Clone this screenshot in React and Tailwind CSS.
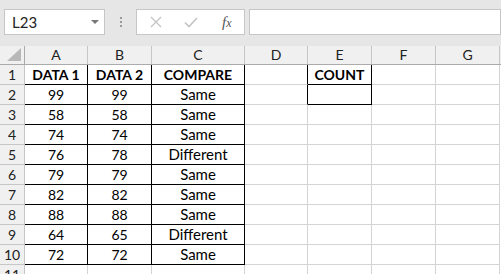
import React from 'react';

const cols = [
    { key: 'A', w: 'w-[63px]' },
    { key: 'B', w: 'w-[64px]' },
    { key: 'C', w: 'w-[93px]' },
    { key: 'D', w: 'w-[63px]' },
    { key: 'E', w: 'w-[64px]' },
    { key: 'F', w: 'w-[64px]' },
    { key: 'G', w: 'w-[64px]' },
];

const rows = [
    ['99', '99', 'Same'],
    ['58', '58', 'Same'],
    ['74', '74', 'Same'],
    ['76', '78', 'Different'],
    ['79', '79', 'Same'],
    ['82', '82', 'Same'],
    ['88', '88', 'Same'],
    ['64', '65', 'Different'],
    ['72', '72', 'Same'],
];

const Toolbar = () => (
    <div className="h-[46px] bg-[#e6e6e6] flex items-start pt-[9px] pl-[4px]">
        <div className="w-[101px] h-[26px] bg-white border border-[#c6c6c6] flex items-center justify-between pl-[7px] pr-[5px]">
            <span className="text-[15px] text-[#222]">L23</span>
            <span className="w-0 h-0 border-l-[4px] border-r-[4px] border-t-[4px] border-l-transparent border-r-transparent border-t-[#777]" />
        </div>
        <div className="w-[31px] h-[26px] flex flex-col items-center justify-center gap-[2px]">
            <span className="w-[2px] h-[2px] bg-[#999]" />
            <span className="w-[2px] h-[2px] bg-[#999]" />
            <span className="w-[2px] h-[2px] bg-[#999]" />
        </div>
        <div className="w-[109px] h-[26px] bg-white border border-[#c6c6c6] flex items-center">
            <svg width="12" height="12" viewBox="0 0 12 12" className="ml-[13px]">
                <path d="M1 1 L11 11 M11 1 L1 11" stroke="#c4c4c4" strokeWidth="1.3" />
            </svg>
            <svg width="14" height="12" viewBox="0 0 14 12" className="ml-[22px]">
                <path d="M1 6.5 L5 10.5 L13 2" stroke="#c4c4c4" strokeWidth="1.6" fill="none" />
            </svg>
            <span className="ml-[24px] text-[15px] italic text-[#555] font-['Liberation_Serif',serif] leading-none">
                f<span className="text-[12px]">x</span>
            </span>
        </div>
        <div className="ml-[4px] flex-1 h-[26px] bg-white border border-[#c6c6c6]" />
    </div>
);

const HeaderRow = () => (
    <div className="flex h-[19px] bg-[#f0f0f0] border-b border-[#ababab]">
        <div className="w-[25px] shrink-0 border-r border-[#ababab] relative">
            <svg width="14" height="13" viewBox="0 0 14 13" className="absolute right-[3px] bottom-[3px]">
                <path d="M14 0 L14 13 L0 13 Z" fill="#b8b8b8" />
            </svg>
        </div>
        {cols.map((c) => (
            <div key={c.key} className={`${c.w} shrink-0 border-r border-[#c6c6c6] flex items-center justify-center text-[14px] text-[#222] leading-none`}>
                {c.key}
            </div>
        ))}
    </div>
);

const Row = ({ n, cells, bold }) => (
    <div className="flex h-[20px]">
        <div className="w-[25px] shrink-0 bg-[#f0f0f0] border-r border-b border-[#c6c6c6] flex items-center justify-center text-[14px] text-[#222] leading-none">
            {n}
        </div>
        {cols.map((c, i) => {
            const inTable = i < 3 && n <= 10;
            const inCount = i === 4 && (n === 1 || n === 2);
            const dRight = i === 3 && (n === 1 || n === 2);
            const bottomBlack = inTable || inCount;
            const rightBlack = inTable || inCount || dRight;
            let text = '';
            if (n === 1) {
                if (i === 0) text = 'DATA 1';
                if (i === 1) text = 'DATA 2';
                if (i === 2) text = 'COMPARE';
                if (i === 4) text = 'COUNT';
            } else if (cells && i < 3) {
                text = cells[i];
            }
            return (
                <div
                    key={c.key}
                    className={`${c.w} shrink-0 border-r border-b ${rightBlack ? 'border-r-black' : 'border-r-[#d4d4d4]'} ${bottomBlack ? 'border-b-black' : 'border-b-[#d4d4d4]'} flex items-center justify-center leading-none ${bold ? 'font-bold text-[14px]' : i === 2 ? 'text-[15px]' : 'text-[14px]'} text-black`}
                >
                    {text}
                </div>
            );
        })}
    </div>
);

const App = () => (
    <div className="w-[501px] h-[274px] overflow-hidden bg-white font-['Lato','Open_Sans',sans-serif]">
        <Toolbar />
        <HeaderRow />
        <Row n={1} bold />
        {rows.map((r, idx) => (
            <Row key={idx} n={idx + 2} cells={r} />
        ))}
        <Row n={11} />
    </div>
);

export default App;
